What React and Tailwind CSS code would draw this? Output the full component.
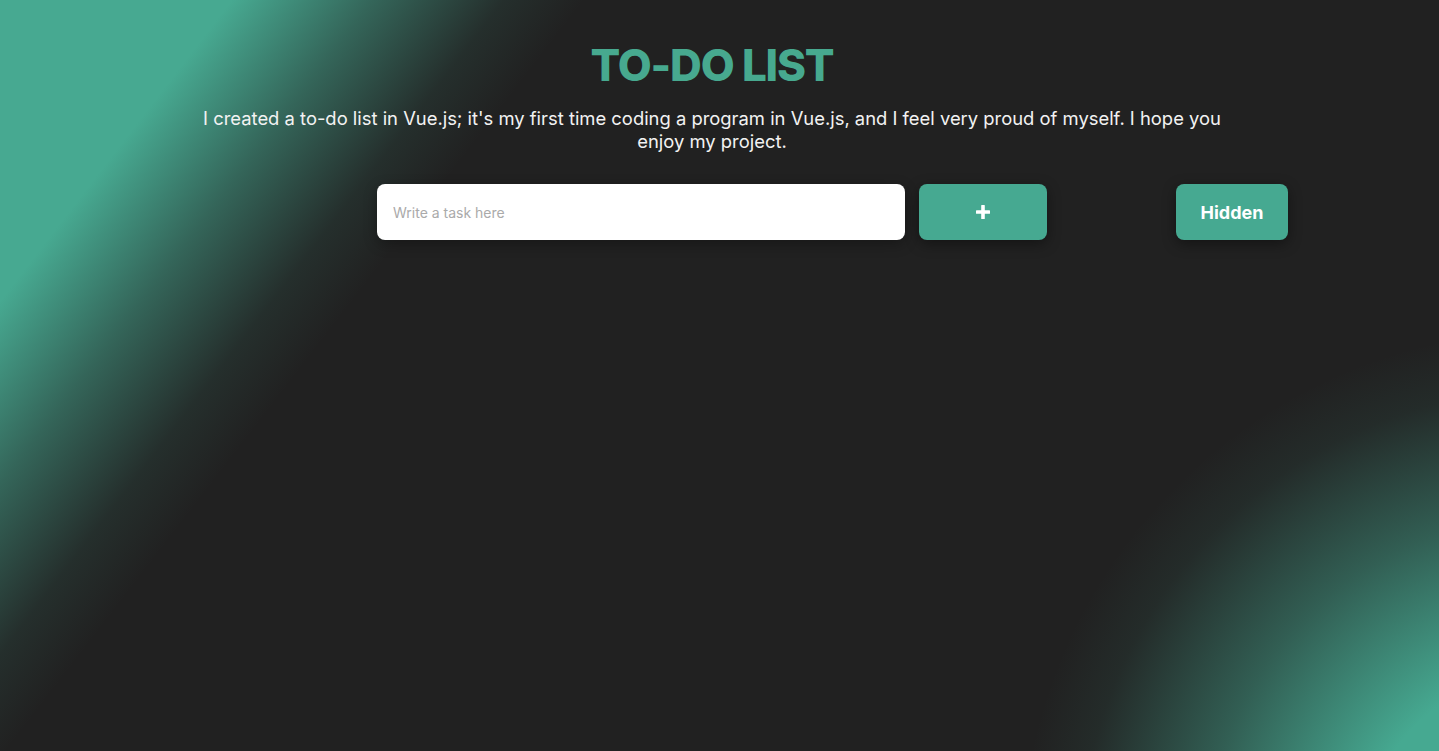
export default function App() {
  return (
    <div className="min-h-screen w-full bg-[#212121] bg-[image:linear-gradient(127.6deg,rgba(71,169,145,1)_11.5%,rgba(71,169,145,0.5)_18.5%,rgba(71,169,145,0.1)_25%,rgba(71,169,145,0)_29%),radial-gradient(circle_at_1550px_860px,rgba(70,169,145,1)_190px,rgba(70,169,145,0.45)_345px,rgba(70,169,145,0.08)_470px,rgba(70,169,145,0)_530px)] font-['Inter','Liberation_Sans',sans-serif]">
      <div className="flex flex-col items-center pr-[15px] pt-[43px]">
        <h1 className="text-[44px] leading-none font-extrabold tracking-[-1.2px] text-[#47a98f]">
          TO-DO LIST
        </h1>

        <p className="mt-[20px] max-w-[1030px] text-center text-[18.4px] leading-[23px] text-[#f2f2f2]">
          I created a to-do list in Vue.js; it's my first time coding a program in Vue.js, and I feel very proud of myself. I hope you enjoy my project.
        </p>

        <div className="mt-[31px] grid w-full grid-cols-[1fr_auto_1fr]">
          <div />
          <div className="flex gap-[14px]">
            <input
              placeholder="Write a task here"
              className="h-14 w-[528px] rounded-lg bg-white px-4 text-[14px] text-[#333] placeholder-[#aaaaaa] shadow-[0_4px_14px_rgba(0,0,0,0.3)] outline-none"
            />
            <button className="flex h-14 w-[128px] items-center justify-center rounded-lg bg-[#46a991] shadow-[0_4px_14px_rgba(0,0,0,0.4)]">
              <svg width="14" height="14" viewBox="0 0 14 14">
                <rect x="5.2" y="0" width="3.6" height="14" rx="0.6" fill="#fff" />
                <rect x="0" y="5.2" width="14" height="3.6" rx="0.6" fill="#fff" />
              </svg>
            </button>
          </div>
          <div>
            <button className="ml-[129px] h-14 w-[112px] rounded-lg bg-[#46a991] text-[18px] font-bold text-white shadow-[0_4px_14px_rgba(0,0,0,0.4)]">
              Hidden
            </button>
          </div>
        </div>
      </div>
    </div>
  );
}
